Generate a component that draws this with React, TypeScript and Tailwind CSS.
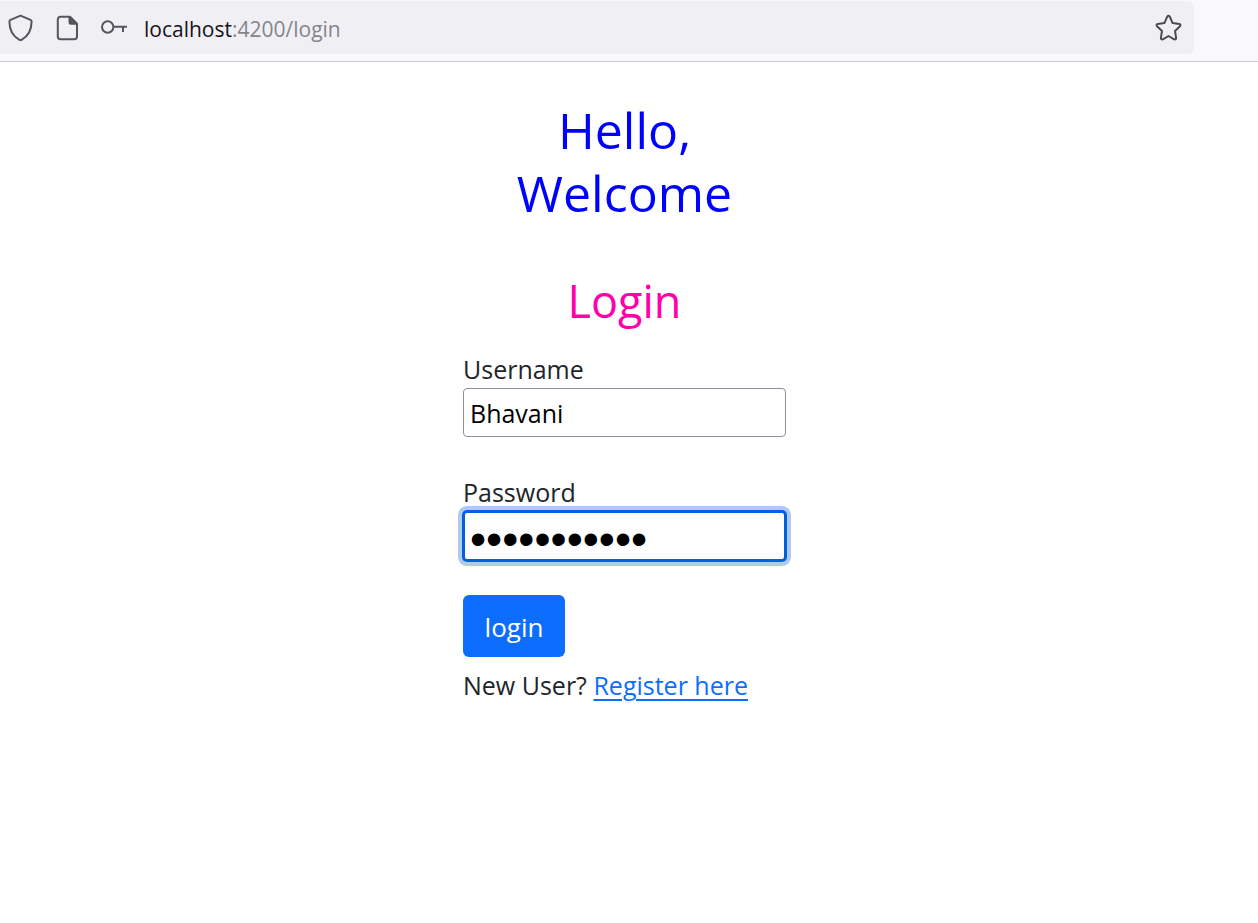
import { useState } from "react";

function ShieldIcon() {
  return (
    <svg className="h-7 w-7" viewBox="0 0 28 28" fill="none" stroke="#55555c" strokeWidth="2" strokeLinejoin="round" aria-hidden="true">
      <path d="M14.500 1.600 24.500 5.800q1.100.5 1.100 1.700c-.1 8.300-3.600 14.700-9.700 18.100a2.800 2.800 0 0 1-2.800 0C7 22.200 3.500 15.800 3.400 7.500Q3.400 6.300 4.500 5.800Z" />
    </svg>
  );
}

function PageIcon() {
  return (
    <svg className="h-7 w-7" viewBox="0 0 28 28" fill="none" stroke="#55555c" strokeWidth="2" strokeLinejoin="round" aria-hidden="true">
      <path d="M7.500 2.700h9.500l7 7v12.800a2.700 2.700 0 0 1-2.700 2.700H7.500a2.700 2.700 0 0 1-2.700-2.700V5.400a2.700 2.700 0 0 1 2.700-2.700Z" />
      <path d="M16.500 3v5.200a1.500 1.500 0 0 0 1.500 1.500h5.500Z" fill="#55555c" />
    </svg>
  );
}

function KeyIcon() {
  return (
    <svg className="h-7 w-7" viewBox="0 0 28 28" fill="none" stroke="#55555c" strokeWidth="2" aria-hidden="true">
      <circle cx="7.700" cy="13" r="5.700" />
      <path d="M13.400 12.700H27M23 12.700v5.300" />
    </svg>
  );
}

function StarIcon() {
  return (
    <svg className="h-7 w-7" viewBox="0 0 28 28" fill="none" stroke="#4b4b52" strokeWidth="2" strokeLinejoin="round" aria-hidden="true">
      <path d="M13.200 2.700q1.300-1.900 2.600 0l2.800 6.400 6.700.9q1.900.5.700 2.200l-5 4.700 1.100 7q0 2-1.900 1.400L14.500 22l-5.700 3.300q-1.900.6-1.900-1.400l1.100-7-5-4.700q-1.200-1.700.7-2.200l6.700-.9Z" />
    </svg>
  );
}

function AddressBar() {
  return (
    <header className="flex h-[62px] border-b border-[#cccccf] bg-[#f9f9fb] pt-px pr-16 pb-[7px]">
      <div className="flex flex-1 items-center rounded-r-md bg-[#f0f0f4] pr-3 pl-1.5">
        <div className="flex shrink-0 items-center gap-[19px]">
          <button type="button" aria-label="Tracking protection"><ShieldIcon /></button>
          <button type="button" aria-label="Site information"><PageIcon /></button>
          <button type="button" aria-label="Saved passwords"><KeyIcon /></button>
        </div>
        <p className="ml-4 flex-1 pt-0.5 text-[21px] leading-7 text-[#85858a]">
          <span className="text-[#15141a]">localhost</span>:4200/login
        </p>
        <button type="button" aria-label="Bookmark this page"><StarIcon /></button>
      </div>
    </header>
  );
}

export default function App() {
  const [username, setUsername] = useState("Bhavani");
  const [password, setPassword] = useState("password123");

  return (
    <div className="min-h-screen bg-white font-['Open_Sans','Noto_Sans',sans-serif] text-[25px] leading-9 text-[#212529]">
      <AddressBar />
      <main className="flex justify-center pt-[37px] pr-[9px]">
        <form className="flex w-[323px] flex-col" onSubmit={(e) => e.preventDefault()}>
          <h1 className="text-center text-[50px] leading-[63px] text-[#0000ff]">
            Hello,
            <br />
            Welcome
          </h1>
          <h2 className="mt-12 text-center text-[45px] leading-[56px] text-[#ff00aa]">Login</h2>

          <label htmlFor="username" className="mt-[22px] mb-px">Username</label>
          <input
            id="username"
            type="text"
            value={username}
            onChange={(e) => setUsername(e.target.value)}
            className="h-[49px] w-full rounded border border-[#8f8f9d] bg-white px-1.5 text-black outline-none"
          />

          <label htmlFor="password" className="mt-[37px] mb-px">Password</label>
          <input
            id="password"
            type="password"
            value={password}
            onChange={(e) => setPassword(e.target.value)}
            className="h-[50px] w-full rounded border-2 border-[#0061e0] bg-white px-[5px] pt-1.5 font-['Liberation_Sans',sans-serif] text-[46px] text-black shadow-[0_0_0_1px_#0061e0,0_0_0_5px_#b2c9ee] outline-none"
          />

          <button type="submit" className="mt-[34px] h-[62px] w-[102px] rounded-md bg-[#0d6efd] pt-0.5 text-[26px] text-white">
            login
          </button>
          <p className="mt-2.5">
            New User?{" "}
            <a href="#register" className="text-[#0d6efd] underline decoration-2 underline-offset-4">Register here</a>
          </p>
        </form>
      </main>
    </div>
  );
}
